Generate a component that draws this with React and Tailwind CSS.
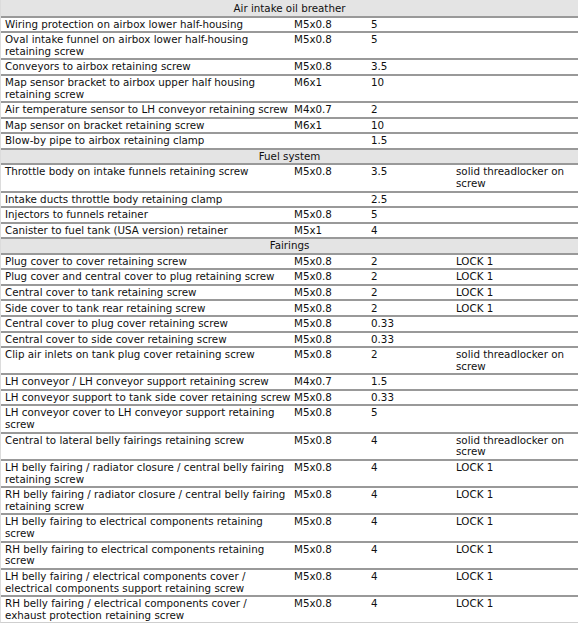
import React from "react";

const rows = [
  { h: "Air intake oil breather", first: true },
  ["Wiring protection on airbox lower half-housing", "M5x0.8", "5", ""],
  [["Oval intake funnel on airbox lower half-housing", "retaining screw"], "M5x0.8", "5", ""],
  ["Conveyors to airbox retaining screw", "M5x0.8", "3.5", ""],
  [["Map sensor bracket to airbox upper half housing", "retaining screw"], "M6x1", "10", ""],
  ["Air temperature sensor to LH conveyor retaining screw", "M4x0.7", "2", ""],
  ["Map sensor on bracket retaining screw", "M6x1", "10", ""],
  ["Blow-by pipe to airbox retaining clamp", "", "1.5", ""],
  { h: "Fuel system" },
  ["Throttle body on intake funnels retaining screw", "M5x0.8", "3.5", ["solid threadlocker on", "screw"]],
  ["Intake ducts throttle body retaining clamp", "", "2.5", ""],
  ["Injectors to funnels retainer", "M5x0.8", "5", ""],
  ["Canister to fuel tank (USA version) retainer", "M5x1", "4", ""],
  { h: "Fairings" },
  ["Plug cover to cover retaining screw", "M5x0.8", "2", "LOCK 1"],
  ["Plug cover and central cover to plug retaining screw", "M5x0.8", "2", "LOCK 1"],
  ["Central cover to tank retaining screw", "M5x0.8", "2", "LOCK 1"],
  ["Side cover to tank rear retaining screw", "M5x0.8", "2", "LOCK 1"],
  ["Central cover to plug cover retaining screw", "M5x0.8", "0.33", ""],
  ["Central cover to side cover retaining screw", "M5x0.8", "0.33", ""],
  ["Clip air inlets on tank plug cover retaining screw", "M5x0.8", "2", ["solid threadlocker on", "screw"]],
  ["LH conveyor / LH conveyor support retaining screw", "M4x0.7", "1.5", ""],
  ["LH conveyor support to tank side cover retaining screw", "M5x0.8", "0.33", ""],
  [["LH conveyor cover to LH conveyor support retaining", "screw"], "M5x0.8", "5", ""],
  ["Central to lateral belly fairings retaining screw", "M5x0.8", "4", ["solid threadlocker on", "screw"]],
  [["LH belly fairing / radiator closure / central belly fairing", "retaining screw"], "M5x0.8", "4", "LOCK 1"],
  [["RH belly fairing / radiator closure / central belly fairing", "retaining screw"], "M5x0.8", "4", "LOCK 1"],
  [["LH belly fairing to electrical components retaining", "screw"], "M5x0.8", "4", "LOCK 1"],
  [["RH belly fairing to electrical components retaining", "screw"], "M5x0.8", "4", "LOCK 1"],
  [["LH belly fairing / electrical components cover /", "electrical components support retaining screw"], "M5x0.8", "4", "LOCK 1"],
  [["RH belly fairing / electrical components cover /", "exhaust protection retaining screw"], "M5x0.8", "4", "LOCK 1"],
];

function Lines({ v }) {
  if (Array.isArray(v)) {
    return (
      <>
        {v.map((l, i) => (
          <div key={i}>{l}</div>
        ))}
      </>
    );
  }
  return <div>{v || "\u00a0"}</div>;
}

export default function App() {
  return (
    <div
      className="w-[580px] h-[626px] bg-white text-[#101010] text-[10.3px] leading-[11.7px] overflow-hidden"
      style={{ fontFamily: '"DejaVu Sans", Verdana, sans-serif' }}
    >
      <div className="w-[578px] border-l border-[#dcdcdc] border-b border-b-[#cfcfcf]">
        {rows.map((r, i) => {
          if (!Array.isArray(r)) {
            return (
              <div
                key={i}
                className={`bg-[#e4e4e4] text-center whitespace-nowrap pt-[1.1px] pb-[0.75px] border-t-2 ${
                  r.first ? "border-[#e4e4e4]" : "border-[#999999]"
                }`}
              >
                {r.h}
              </div>
            );
          }
          const [desc, thread, torque, note] = r;
          return (
            <div
              key={i}
              className="grid grid-cols-[289px_78px_84px_126px] border-t-2 border-[#999999] whitespace-nowrap pt-[1.1px] pb-[0.75px]"
            >
              <div className="pl-[4px]">
                <Lines v={desc} />
              </div>
              <div className="pl-[4px]">
                <Lines v={thread} />
              </div>
              <div className="pl-[3px]">
                <Lines v={torque} />
              </div>
              <div className="pl-[4px]">
                <Lines v={note} />
              </div>
            </div>
          );
        })}
      </div>
    </div>
  );
}
